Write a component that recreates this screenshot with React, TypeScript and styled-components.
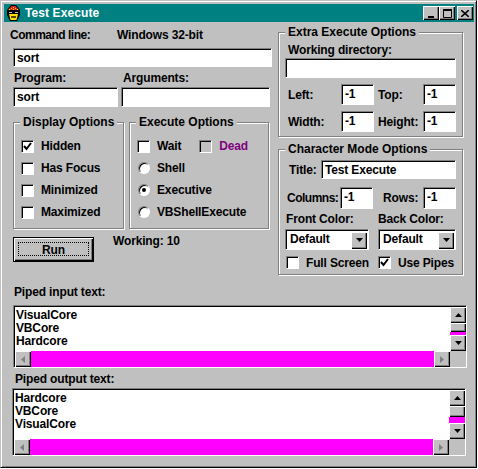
import React from 'react';
import styled, { createGlobalStyle } from 'styled-components';

const GlobalStyle = createGlobalStyle`
  html, body { margin: 0; padding: 0; background: #fff; }
  * { box-sizing: border-box; }
`;

const Window = styled.div`
  width: 477px;
  height: 468px;
  background: #c0c0c0;
  border: 1px solid;
  border-color: #c0c0c0 #000 #000 #c0c0c0;
  box-shadow: inset 1px 1px 0 #fff, inset -1px -1px 0 #808080;
  padding: 3px 2px 0 3px;
  font-family: "Liberation Sans", Arial, sans-serif;
  font-size: 12px;
  font-weight: 700;
  letter-spacing: -0.15px;
  color: #000;
  overflow: hidden;
`;

const TitleBar = styled.div`
  height: 18px;
  background: #008080;
  display: flex;
  align-items: center;
  padding: 0 1px 0 3px;
  color: #fff;
  font-size: 12px;
  letter-spacing: 0.1px;
`;

const TitleText = styled.span`
  margin-left: 5px;
  flex: 1;
`;

const CaptionButton = styled.div<{ $gap?: boolean }>`
  width: 16px;
  height: 14px;
  margin-left: ${p => (p.$gap ? 2 : 0)}px;
  background: #c0c0c0;
  box-shadow: inset 1px 1px 0 #fff, inset -1px -1px 0 #000, inset -2px -2px 0 #808080;
  display: flex;
  align-items: center;
  justify-content: center;
`;

const Body = styled.div`
  display: grid;
  grid-template-columns: 269px 185px;
  padding-left: 5px;
`;

const LeftColumn = styled.div`
  display: flex;
  flex-direction: column;
  padding-left: 4px;
`;

const RightColumn = styled.div`
  display: flex;
  flex-direction: column;
  padding-top: 3px;
  gap: 5px;
`;

const TopLabels = styled.div`
  display: flex;
  padding: 6px 0 0 0;
  margin-left: -3px;
  height: 26px;
`;

const Label = styled.span<{ $width?: number; $color?: string; $pad?: number; $tight?: boolean }>`
  display: inline-block;
  line-height: 14px;
  white-space: nowrap;
  width: ${p => (p.$width ? `${p.$width}px` : 'auto')};
  padding-left: ${p => p.$pad || 0}px;
  color: ${p => p.$color || '#000'};
  letter-spacing: ${p => (p.$tight ? '-0.5px' : 'inherit')};
`;

const Field = styled.div<{ $width: number; $height?: number }>`
  width: ${p => p.$width}px;
  height: ${p => p.$height || 20}px;
  flex: none;
  background: #fff;
  border: 1px solid;
  border-color: #808080 #fff #fff #808080;
  box-shadow: inset 1px 1px 0 #000;
  padding: 2px 0 0 3px;
  line-height: 15px;
`;

const Row = styled.div<{ $top?: number; $left?: number; $gap?: number }>`
  display: flex;
  align-items: center;
  margin-top: ${p => p.$top || 0}px;
  margin-left: ${p => p.$left || 0}px;
  gap: ${p => p.$gap || 0}px;
`;

const Group = styled.fieldset<{ $width?: number; $height: number }>`
  width: ${p => (p.$width ? `${p.$width}px` : '100%')};
  height: ${p => p.$height}px;
  flex: none;
  margin: 0;
  padding: 0;
  min-width: 0;
  border: 1px solid #808080;
  box-shadow: 1px 1px 0 #fff, inset 1px 1px 0 #fff;
`;

const Legend = styled.legend`
  margin-left: 6px;
  padding: 0 3px;
  line-height: 14px;
  background: #c0c0c0;
  position: relative;
  letter-spacing: 0;
`;

const OptionsRow = styled.div`
  display: flex;
  gap: 5px;
  margin-top: 8px;
`;

const OptionList = styled.div`
  display: flex;
  flex-direction: column;
  padding: 6px 0 0 7px;
`;

const Option = styled.div<{ $height?: number; $width?: number }>`
  display: flex;
  align-items: center;
  height: ${p => p.$height || 22}px;
  width: ${p => (p.$width ? `${p.$width}px` : 'auto')};
  gap: 7px;
`;

const CheckBox = styled.span<{ $disabled?: boolean }>`
  width: 13px;
  height: 13px;
  flex: none;
  background: ${p => (p.$disabled ? '#c0c0c0' : '#fff')};
  border: 1px solid;
  border-color: #808080 #fff #fff #808080;
  box-shadow: inset 1px 1px 0 #000;
  display: flex;
  align-items: center;
  justify-content: center;
`;

const Radio = styled.span`
  width: 12px;
  height: 12px;
  flex: none;
  margin-left: 1px;
  border-radius: 50%;
  background: #fff;
  border: 1px solid;
  border-color: #808080 #fff #fff #808080;
  box-shadow: inset 1px 1px 0 #000;
  display: flex;
  align-items: center;
  justify-content: center;
`;

const RadioDot = styled.span`
  width: 4px;
  height: 4px;
  border-radius: 50%;
  background: #000;
`;

const RunRow = styled.div`
  display: flex;
  margin-top: 8px;
`;

const RunButton = styled.div`
  width: 81px;
  height: 25px;
  background: #c0c0c0;
  border: 1px solid #000;
  box-shadow: inset 1px 1px 0 #fff, inset -1px -1px 0 #000, inset -2px -2px 0 #808080;
  display: flex;
  align-items: center;
  justify-content: center;
  position: relative;
  &::after {
    content: '';
    position: absolute;
    inset: 4px 4px 5px 4px;
    border: 1px dotted #000;
  }
`;

const Status = styled.span`
  margin: -3px 0 0 19px;
  line-height: 14px;
`;

const Section = styled.div<{ $left: number }>`
  margin-left: ${p => p.$left}px;
`;

const SectionLabel = styled.div<{ $top: number; $left: number; $bottom: number }>`
  margin: ${p => p.$top}px 0 ${p => p.$bottom}px ${p => p.$left}px;
  line-height: 14px;
`;

const ListBox = styled.div<{ $width: number; $height: number }>`
  width: ${p => p.$width}px;
  height: ${p => p.$height}px;
  border: 1px solid;
  border-color: #808080 #fff #fff #808080;
  box-shadow: inset 1px 1px 0 #000;
  padding: 1px 0 0 1px;
  display: grid;
  grid-template-columns: 1fr 16px;
  grid-template-rows: 1fr 16px;
  background: #fff;
`;

const ListText = styled.div`
  line-height: 13px;
  padding: 2px 0 0 1px;
`;

const VerticalBar = styled.div`
  grid-row: 1;
  grid-column: 2;
  display: flex;
  flex-direction: column;
  background: #ff00ff;
  justify-content: space-between;
`;

const ScrollCluster = styled.div`
  display: flex;
  flex-direction: column;
`;

const HorizontalBar = styled.div`
  grid-row: 2;
  grid-column: 1;
  display: flex;
  background: #ff00ff;
  justify-content: space-between;
`;

const Corner = styled.div`
  grid-row: 2;
  grid-column: 2;
  background: #c0c0c0;
`;

const ScrollButton = styled.div<{ $height?: number; $width?: number }>`
  width: ${p => p.$width || 16}px;
  height: ${p => p.$height || 16}px;
  flex: none;
  background: #c0c0c0;
  box-shadow: inset 1px 1px 0 #fff, inset -1px -1px 0 #000, inset -2px -2px 0 #808080;
  display: flex;
  align-items: center;
  justify-content: center;
`;

const Select = styled(Field)`
  padding: 0;
  display: flex;
  align-items: center;
  justify-content: space-between;
`;

const SelectText = styled.span`
  padding: 0 0 0 4px;
`;

const SelectButton = styled(ScrollButton)`
  margin: 1px 1px 0 0;
`;

const Arrow = ({ dir, color = '#000' }: { dir: 'up' | 'down' | 'left' | 'right'; color?: string }) => {
  const points = {
    up: '3.5,0 7,4 0,4',
    down: '0,0 7,0 3.5,4',
    left: '4,0 4,7 0,3.5',
    right: '0,0 4,3.5 0,7',
  }[dir];
  const vertical = dir === 'up' || dir === 'down';
  return (
    <svg width={vertical ? 7 : 4} height={vertical ? 4 : 7} aria-hidden="true">
      <polygon points={points} fill={color} />
    </svg>
  );
};

const Tick = () => (
  <svg width="9" height="9" viewBox="0 0 9 9" aria-hidden="true">
    <path d="M1 4 L3.5 7 L8 1" fill="none" stroke="#000" strokeWidth="2" />
  </svg>
);

const HelmetIcon = () => (
  <svg width="13" height="16" viewBox="0 0 13 16" aria-hidden="true">
    <path d="M4 0 H9 L13 5 V10 L10 16 H3 L0 10 V5 Z" fill="#000" />
    <path d="M4.5 1 H8.5 L12 5 H1 Z" fill="#e02020" />
    <path d="M6 2 H7 V3 H6 Z M4 3 H5 V4 H4 Z M8 3 H9 V4 H8 Z M6 4 H7 V5 H6 Z M2 4 H3 V5 H2 Z M10 4 H11 V5 H10 Z" fill="#ffe000" />
    <rect x="1" y="6" width="11" height="3" fill="#000" />
    <rect x="2" y="7" width="3" height="1" fill="#c0c0c0" />
    <rect x="8" y="7" width="3" height="1" fill="#c0c0c0" />
    <path d="M2 9 H11 L9.5 15 H3.5 Z" fill="#ffe000" />
    <rect x="4" y="11" width="5" height="2" fill="#604000" />
  </svg>
);

const MinimizeGlyph = () => (
  <svg width="8" height="9" aria-hidden="true"><rect x="1" y="7" width="6" height="2" fill="#000" /></svg>
);

const MaximizeGlyph = () => (
  <svg width="9" height="9" aria-hidden="true">
    <path d="M0.5 1.5 H8.5 V8.5 H0.5 Z" fill="none" stroke="#000" />
    <rect y="0" width="9" height="2" fill="#000" />
  </svg>
);

const CloseGlyph = () => (
  <svg width="8" height="7" aria-hidden="true">
    <path d="M0 0 L8 7 M8 0 L0 7" stroke="#000" strokeWidth="1.6" />
  </svg>
);

const TextPane = ({ lines, thumbHeight }: { lines: string[]; thumbHeight: number }) => (
  <>
    <ListText>
      {lines.map(line => (
        <div key={line}>{line}</div>
      ))}
    </ListText>
    <VerticalBar>
      <ScrollCluster>
        <ScrollButton><Arrow dir="up" /></ScrollButton>
        <ScrollButton $height={thumbHeight} />
      </ScrollCluster>
      <ScrollButton><Arrow dir="down" /></ScrollButton>
    </VerticalBar>
    <HorizontalBar>
      <ScrollButton><Arrow dir="left" color="#808080" /></ScrollButton>
      <ScrollButton><Arrow dir="right" color="#808080" /></ScrollButton>
    </HorizontalBar>
    <Corner />
  </>
);

export default function App() {
  return (
    <>
      <GlobalStyle />
      <Window>
        <TitleBar>
          <HelmetIcon />
          <TitleText>Test Execute</TitleText>
          <CaptionButton><MinimizeGlyph /></CaptionButton>
          <CaptionButton><MaximizeGlyph /></CaptionButton>
          <CaptionButton $gap><CloseGlyph /></CaptionButton>
        </TitleBar>
        <Body>
          <LeftColumn>
            <TopLabels>
              <Label $width={107} $tight>Command line:</Label>
              <Label>Windows 32-bit</Label>
            </TopLabels>
            <Field $width={259} $height={19}>sort</Field>
            <Row $top={4} $left={1}>
              <Label $width={109}>Program:</Label>
              <Label>Arguments:</Label>
            </Row>
            <Row $top={2} $gap={3}>
              <Field $width={105}>sort</Field>
              <Field $width={149} />
            </Row>
            <OptionsRow>
              <Group $width={111} $height={114}>
                <Legend>Display Options</Legend>
                <OptionList>
                  <Option><CheckBox><Tick /></CheckBox>Hidden</Option>
                  <Option><CheckBox />Has Focus</Option>
                  <Option><CheckBox />Minimized</Option>
                  <Option><CheckBox />Maximized</Option>
                </OptionList>
              </Group>
              <Group $width={140} $height={114}>
                <Legend>Execute Options</Legend>
                <OptionList>
                  <Row $gap={18}>
                    <Option><CheckBox />Wait</Option>
                    <Option><CheckBox $disabled /><Label $color="#800080">Dead</Label></Option>
                  </Row>
                  <Option><Radio />Shell</Option>
                  <Option><Radio><RadioDot /></Radio>Executive</Option>
                  <Option><Radio />VBShellExecute</Option>
                </OptionList>
              </Group>
            </OptionsRow>
            <RunRow>
              <RunButton>Run</RunButton>
              <Status>Working: 10</Status>
            </RunRow>
          </LeftColumn>
          <RightColumn>
            <Group $height={112}>
              <Legend>Extra Execute Options</Legend>
              <Row $left={9} $top={4}><Label>Working directory:</Label></Row>
              <Row $left={6} $top={1}><Field $width={171} /></Row>
              <Row $left={9} $top={6}>
                <Label $width={53}>Left:</Label>
                <Field $width={33} $height={21}>-1</Field>
                <Label $width={49} $pad={4}>Top:</Label>
                <Field $width={33} $height={21}>-1</Field>
              </Row>
              <Row $left={9} $top={6}>
                <Label $width={53}>Width:</Label>
                <Field $width={33} $height={21}>-1</Field>
                <Label $width={49} $pad={4}>Height:</Label>
                <Field $width={33} $height={21}>-1</Field>
              </Row>
            </Group>
            <Group $height={133}>
              <Legend>Character Mode Options</Legend>
              <Row $left={10} $top={4}>
                <Label $width={32}>Title:</Label>
                <Field $width={135} $height={19}>Test Execute</Field>
              </Row>
              <Row $left={8} $top={8}>
                <Label $width={53} $tight>Columns:</Label>
                <Field $width={33} $height={22}>-1</Field>
                <Label $width={50} $pad={10}>Rows:</Label>
                <Field $width={33} $height={22}>-1</Field>
              </Row>
              <Row $left={7} $top={3}>
                <Label $width={92}>Front Color:</Label>
                <Label>Back Color:</Label>
              </Row>
              <Row $left={6} $top={3} $gap={9}>
                <Select $width={84} $height={21}><SelectText>Default</SelectText><SelectButton $height={17}><Arrow dir="down" /></SelectButton></Select>
                <Select $width={78} $height={21}><SelectText>Default</SelectText><SelectButton $height={17}><Arrow dir="down" /></SelectButton></Select>
              </Row>
              <Row $left={7} $top={6}>
                <Option $height={13} $width={92}><CheckBox />Full Screen</Option>
                <Option $height={13}><CheckBox><Tick /></CheckBox>Use Pipes</Option>
              </Row>
            </Group>
          </RightColumn>
        </Body>
        <Section $left={9}>
          <SectionLabel $top={10} $left={1} $bottom={6}>Piped input text:</SectionLabel>
          <ListBox $width={454} $height={63}>
            <TextPane lines={['VisualCore', 'VBCore', 'Hardcore']} thumbHeight={9} />
          </ListBox>
        </Section>
        <Section $left={8}>
          <SectionLabel $top={4} $left={3} $bottom={2}>Piped output text:</SectionLabel>
          <ListBox $width={454} $height={68}>
            <TextPane lines={['Hardcore', 'VBCore', 'VisualCore']} thumbHeight={11} />
          </ListBox>
        </Section>
      </Window>
    </>
  );
}
